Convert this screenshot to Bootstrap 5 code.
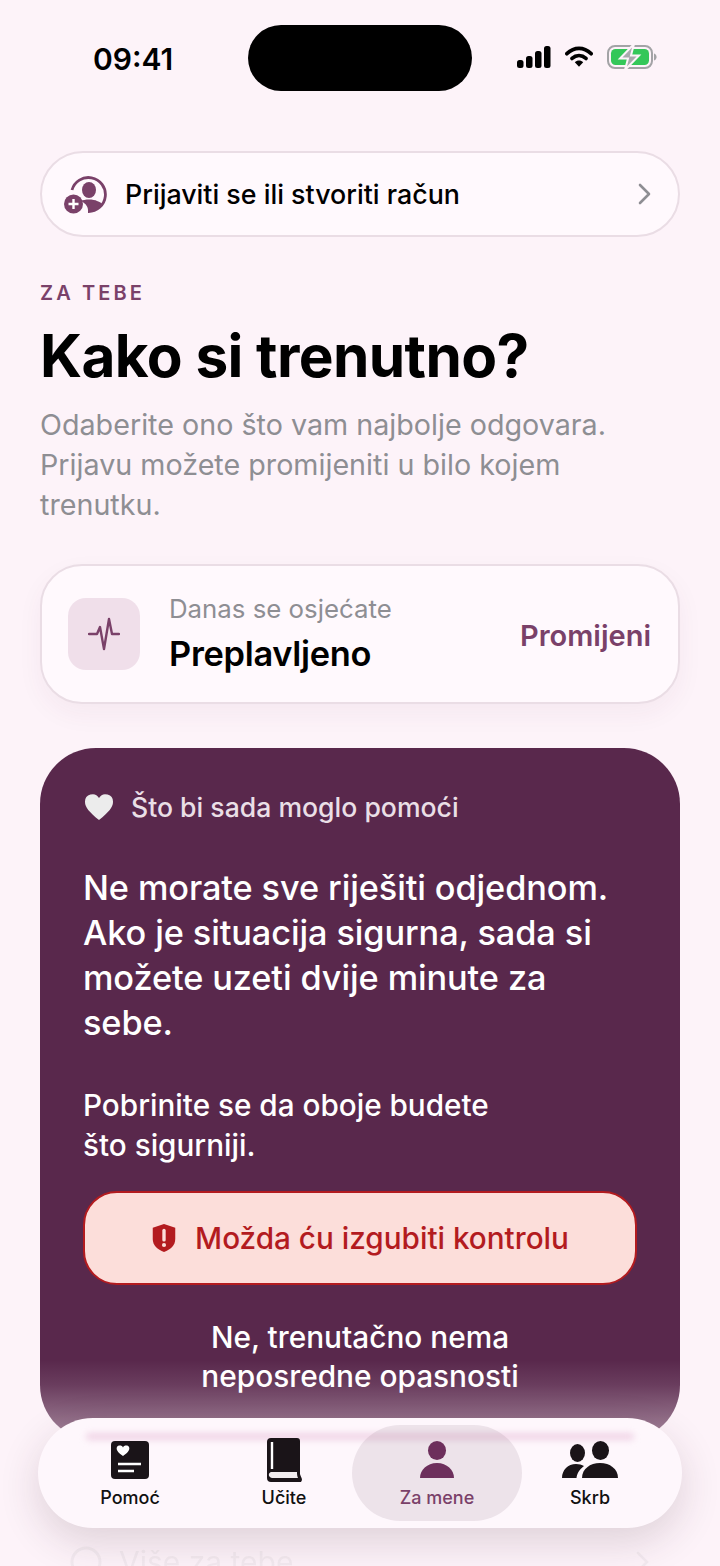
<!DOCTYPE html>
<html lang="hr">
<head>
  <meta charset="UTF-8">
  <meta name="viewport" content="width=device-width, initial-scale=1.0">
  <title>Za mene</title>
  <link rel="stylesheet" href="https://cdn.jsdelivr.net/npm/bootstrap@5.3.0/dist/css/bootstrap.min.css">
  <style>
    html, body { height: 1566px; overflow: hidden; }
    body {
      background: #fdf3f9;
      font-family: "Inter", "Liberation Sans", sans-serif;
      color: #000;
    }
    .screen { position: relative; width: 720px; height: 1566px; overflow: hidden; padding: 0 40px; }
    .status-row { height: 151px; padding: 42px 23px 0 53px; align-items: flex-start; }
    .clock { font-size: 30px; font-weight: 600; line-height: 34px; }
    .status-icons { gap: 14px; padding-top: 2px; }
    .island { position: absolute; left: 248px; top: 25px; width: 224px; height: 66px; background: #000; border-radius: 33px; }
    .login-pill {
      height: 86px; border: 2px solid #eadde5; border-radius: 43px; background: #fff9fd;
      padding: 0 26px 0 22px; font-size: 26.800px; font-weight: 500;
    }
    .login-icon { margin-top: 1px; margin-right: 17px; }
    .eyebrow { margin-top: 44px; font-size: 20px; font-weight: 600; letter-spacing: 3.1px; color: #7a4169; line-height: 24px; }
    .page-title { margin: 15px 0 0; font-size: 58.500px; font-weight: 700; line-height: 72px; letter-spacing: -0.6px; }
    .page-sub { margin: 13px 0 0; font-size: 28.700px; line-height: 40px; color: #8e8e93; }
    .mood-card {
      margin-top: 39px; height: 140px; border: 2px solid #eadde5; border-radius: 42px; background: #fff9fd;
      padding: 0 27px 0 26px; box-shadow: 0 10px 26px rgba(90, 40, 76, .05);
    }
    .mood-icon { width: 72px; height: 72px; border-radius: 18px; background: #f0dfea; }
    .mood-text { margin-left: 29px; padding-top: 1px; }
    .mood-label { font-size: 25.800px; line-height: 30px; color: #8e8e93; }
    .mood-value { margin-top: 8px; font-size: 34.400px; font-weight: 600; line-height: 44px; letter-spacing: -0.3px; }
    .mood-change { font-size: 29px; font-weight: 600; color: #7a4169; padding-top: 3px; }
    .help-card {
      margin-top: 44px; height: 693px; background: #59284c; border-radius: 56px; padding: 41px 43px; color: #fff;
    }
    .help-head { font-size: 26.600px; font-weight: 500; line-height: 36px; color: #eadfe6; }
    .help-heart { margin: 0 17px 0 1px; }
    .help-lead { margin: 40px 0 0; font-size: 34.300px; font-weight: 500; line-height: 45px; letter-spacing: -0.1px; }
    .help-note { margin: 40px 0 0; font-size: 29.700px; font-weight: 500; line-height: 40px; }
    .danger-btn {
      margin-top: 26px; width: 100%; height: 94px; background: #fcdeda; border: 2px solid #b31b1f;
      border-radius: 34px; color: #b31b1f; font-size: 29.700px; font-weight: 500;
    }
    .danger-btn:hover { background: #fcdeda; color: #b31b1f; border-color: #b31b1f; }
    .danger-btn svg { margin-right: 18px; }
    .safe-text { margin-top: 33px; font-size: 29.800px; font-weight: 500; line-height: 39px; text-align: center; }
    .more-row { position: absolute; left: 70px; right: 70px; top: 1542px; font-size: 30px; line-height: 40px; color: #8e8e93; opacity: .6; }
    .more-row svg.more-dot { margin-right: 17px; }
    .fade-layer {
      position: absolute; left: 0; right: 0; top: 1360px; height: 206px;
      background: linear-gradient(to bottom, rgba(253,243,249,0) 0, rgba(253,243,249,.1) 12%, rgba(253,243,249,.5) 40%, rgba(253,243,249,.85) 62%, rgba(253,243,249,.85) 100%);
    }
    .tab-bar {
      position: absolute; left: 38px; top: 1418px; width: 644px; height: 110px; border-radius: 55px;
      background: #fef7fc; box-shadow: 0 14px 40px rgba(60, 30, 50, .16); overflow: hidden;
    }
    .tab-glow { position: absolute; left: 48px; right: 48px; top: 15px; height: 7px; background: #f0d4e6; filter: blur(3px); border-radius: 4px; }
    .tab-active { position: absolute; left: 314px; top: 7px; width: 170px; height: 96px; border-radius: 48px; background: rgba(90, 60, 80, .1); }
    .tab-item {
      position: absolute; top: 0; width: 120px; height: 110px; display: flex; flex-direction: column; align-items: center;
      font-size: 18px; font-weight: 500; color: #111;
    }
    .tab-item svg { position: absolute; top: 23px; }
    .tab-item svg.tab-book { top: 20px; }
    .tab-item span { position: absolute; top: 68px; line-height: 24px; }
    .tab-on { color: #7a4169; }
    .tab-pos-1 { left: 32px; }
    .tab-pos-2 { left: 186px; }
    .tab-pos-3 { left: 339px; }
    .tab-pos-4 { left: 492px; }
  </style>
</head>
<body>
  <div class="screen">
    <div class="d-flex justify-content-between status-row">
      <div class="clock">09:41</div>
      <div class="d-flex align-items-center status-icons">
        <svg width="34" height="24" viewBox="0 0 34 24"><rect x="0" y="15" width="6.500" height="8" rx="2.500"/><rect x="9" y="11" width="6.500" height="12" rx="2.500"/><rect x="18" y="6" width="6.500" height="17" rx="2.500"/><rect x="27" y="1" width="6.500" height="22" rx="2.500"/></svg>
        <svg width="28" height="24" viewBox="0 0 30 24"><path d="M2 8.500C10 1 20 1 28 8.500" fill="none" stroke="#000" stroke-width="4" stroke-linecap="round"/><path d="M7.500 13.500C12 9.500 18 9.500 22.500 13.500" fill="none" stroke="#000" stroke-width="4" stroke-linecap="round"/><path d="M10.500 17.500L15 22.500 19.500 17.500C17 15 13 15 10.500 17.500Z"/></svg>
        <svg width="50" height="26" viewBox="0 0 50 26"><rect x="1" y="2" width="44" height="22" rx="7" fill="none" stroke="#a3a3a6" stroke-width="2"/><rect x="4" y="5" width="38" height="16" rx="4.500" fill="#34c759"/><path d="M47 9.500c1.800.6 2.600 2 2.600 3.500s-.8 2.900-2.600 3.500z" fill="#a3a3a6"/><path d="M27 0L13 14.500h8L18 26l14-14.500h-8z" fill="#a9a9ad" stroke="#fdf3f9" stroke-width="2"/></svg>
      </div>
    </div>
    <div class="island"></div>

    <div class="d-flex align-items-center login-pill">
      <svg class="login-icon" width="44" height="38" viewBox="0 0 44 38">
        <path d="M8 14A17 17 0 1 1 24 35.500" fill="none" stroke="#7a4169" stroke-width="2.800"/>
        <ellipse cx="25" cy="14" rx="7" ry="8" fill="#7a4169"/>
        <path d="M17 25c3-2 13-2 16 0 3 1 4.500 2 5 3-3 5-8 7-14 7.500 .5-4-2-8-7-10.500z" fill="#7a4169"/>
        <circle cx="9.500" cy="28" r="9.500" fill="#7a4169"/>
        <path d="M4.500 28h10M9.500 23v10" stroke="#fff" stroke-width="2.400"/>
      </svg>
      <span class="flex-grow-1">Prijaviti se ili stvoriti račun</span>
      <svg width="14" height="22" viewBox="0 0 14 22"><path d="M2 2l9 9-9 9" fill="none" stroke="#8e8e93" stroke-width="2.600" stroke-linecap="round" stroke-linejoin="round"/></svg>
    </div>

    <div class="eyebrow">ZA TEBE</div>
    <h1 class="page-title">Kako si trenutno?</h1>
    <p class="page-sub">Odaberite ono što vam najbolje odgovara.<br>Prijavu možete promijeniti u bilo kojem<br>trenutku.</p>

    <div class="d-flex align-items-center mood-card">
      <div class="d-flex align-items-center justify-content-center mood-icon">
        <svg width="32" height="34" viewBox="0 0 32 34"><path d="M1 17h8l3-7 4 22 5-30 3 15h7" fill="none" stroke="#7a4169" stroke-width="2.400" stroke-linecap="round" stroke-linejoin="round"/></svg>
      </div>
      <div class="flex-grow-1 mood-text">
        <div class="mood-label">Danas se osjećate</div>
        <div class="mood-value">Preplavljeno</div>
      </div>
      <div class="mood-change">Promijeni</div>
    </div>

    <div class="help-card">
      <div class="d-flex align-items-center help-head">
        <svg class="help-heart" width="30" height="28" viewBox="0 0 30 28"><path d="M15 27C5 19 1 14 1 9a7.500 7.500 0 0 1 14-4 7.500 7.500 0 0 1 14 4c0 5-4 10-14 18z" fill="#ececec"/></svg>
        Što bi sada moglo pomoći
      </div>
      <p class="help-lead">Ne morate sve riješiti odjednom.<br>Ako je situacija sigurna, sada si<br>možete uzeti dvije minute za<br>sebe.</p>
      <p class="help-note">Pobrinite se da oboje budete<br>što sigurniji.</p>
      <button type="button" class="btn d-flex align-items-center justify-content-center danger-btn">
        <svg width="26" height="30" viewBox="0 0 26 32"><path d="M13 1l12 4v12c0 7-5 11-12 14C6 28 1 24 1 17V5z" fill="#b31b1f"/><path d="M13 8v10" stroke="#fcdeda" stroke-width="3.600" stroke-linecap="round"/><circle cx="13" cy="23.500" r="2.200" fill="#fcdeda"/></svg>
        Možda ću izgubiti kontrolu
      </button>
      <div class="safe-text">Ne, trenutačno nema<br>neposredne opasnosti</div>
    </div>

    <div class="d-flex align-items-center more-row">
      <svg class="more-dot" width="32" height="32" viewBox="0 0 32 32"><circle cx="16" cy="16" r="14" fill="none" stroke="#8e8e93" stroke-width="3"/></svg>
      <span class="flex-grow-1">Više za tebe</span>
      <svg width="14" height="22" viewBox="0 0 14 22"><path d="M2 2l9 9-9 9" fill="none" stroke="#8e8e93" stroke-width="2.600" stroke-linecap="round"/></svg>
    </div>
    <div class="fade-layer"></div>

    <nav class="tab-bar">
      <div class="tab-glow"></div>
      <div class="tab-active"></div>
      <div class="tab-item tab-pos-1">
        <svg width="38" height="38" viewBox="0 0 38 38"><rect x="0" y="0" width="38" height="38" rx="4" fill="#1a1418"/><path d="M12 15C6 11 5 8 6 6c1.200-2 5-2 6 .5C13 4 16.800 4 18 6c1 2 0 5-6 9z" fill="#fff"/><path d="M7 23h23M7 30h16" stroke="#fff" stroke-width="2.400"/></svg>
        <span>Pomoć</span>
      </div>
      <div class="tab-item tab-pos-2">
        <svg class="tab-book" width="36" height="44" viewBox="0 0 36 44"><path d="M5 0h26a3 3 0 0 1 3 3v33c0 1 2 4 2 6l-1 2H5a4 4 0 0 1-4-4V4a4 4 0 0 1 4-4z" fill="#1a1418"/><path d="M6 4v27" stroke="#fff" stroke-width="2.400"/><path d="M5 34h26c0 2 0 4 1 6H6c-4-1-4-5-1-6z" fill="#f1ecef"/></svg>
        <span>Učite</span>
      </div>
      <div class="tab-item tab-on tab-pos-3">
        <svg width="36" height="38" viewBox="0 0 36 38"><ellipse cx="18" cy="9.500" rx="9" ry="9.500" fill="#6d2f5c"/><path d="M1 37c0-8 7-15 17-15s17 7 17 15z" fill="#6d2f5c"/></svg>
        <span>Za mene</span>
      </div>
      <div class="tab-item tab-pos-4">
        <svg width="56" height="38" viewBox="0 0 56 38"><ellipse cx="15.500" cy="12" rx="7.500" ry="9" fill="#1a1418"/><ellipse cx="38.500" cy="9.500" rx="8.500" ry="9.500" fill="#1a1418"/><path d="M0 37c0-8 6-14 14-14 3 0 6 .8 8 2-4 3-7 7-7.500 12z" fill="#1a1418"/><path d="M20 37c0-9 8-15 18-15s18 6 18 15z" fill="#1a1418"/></svg>
        <span>Skrb</span>
      </div>
    </nav>
  </div>
  <script src="https://cdn.jsdelivr.net/npm/bootstrap@5.3.0/dist/js/bootstrap.bundle.min.js"></script>
</body>
</html>
